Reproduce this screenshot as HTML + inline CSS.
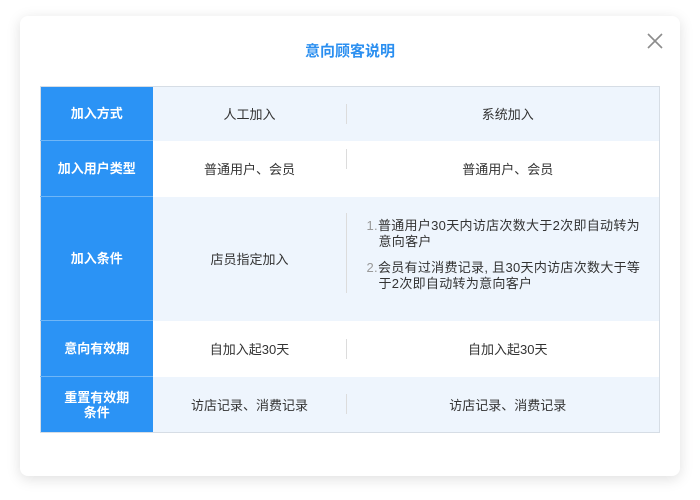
<!DOCTYPE html>
<html><head><meta charset="utf-8"><style>
*{margin:0;padding:0;box-sizing:border-box}
body{width:700px;height:500px;background:#fff;font-family:"Liberation Sans","Noto Sans CJK SC",sans-serif;position:relative;overflow:hidden}
.card{position:absolute;left:20px;top:16px;width:660px;height:460px;background:#fff;border-radius:8px;box-shadow:0 3px 14px rgba(0,0,0,0.13)}
.title{position:absolute;left:0;right:0;top:26px;text-align:center;color:#2b8ff0;font-size:15px;font-weight:bold;line-height:20px}
.close{position:absolute;left:627px;top:17px}
table{position:absolute;left:20px;top:70px;width:620px;border-collapse:collapse;border:1px solid #d6dde5;font-size:13px;color:#333}
td{text-align:center;vertical-align:middle;position:relative;padding:0}
td.l{width:112px;background:#2b93f5;color:#fff;font-weight:bold;font-size:13px;line-height:15px;border-bottom:1px solid #6fb6f7}
tr:last-child td.l{border-bottom:none}
td.b{width:194px}
td.c{padding-left:10px}
tr.a td.b,tr.a td.c{background:#eef5fd}
td.b:after{content:"";position:absolute;right:0;top:50%;height:20px;margin-top:-10px;border-right:1px solid #dcdcdc}
tr.r2 td.b:after{top:8px;margin-top:0}
tr.tall td.b:after{height:80px;margin-top:-46px}
ol{list-style:none;text-align:left;padding:0 12px 0 10px;line-height:16px;letter-spacing:0.3px}
ol li{padding-left:12px;text-indent:-12px;margin:0}
ol li+li{margin-top:10px}
ol span{color:#999}
</style></head><body>
<div class="card">
<div class="title">意向顾客说明</div>
<svg class="close" width="16" height="16" viewBox="0 0 16 16"><path d="M1 1L15 15M15 1L1 15" stroke="#8c8c8c" stroke-width="1.6"/></svg>
<table>
<tr class="a" style="height:54px"><td class="l">加入方式</td><td class="b">人工加入</td><td class="c">系统加入</td></tr>
<tr class="r2" style="height:56px"><td class="l">加入用户类型</td><td class="b">普通用户、会员</td><td class="c">普通用户、会员</td></tr>
<tr class="a tall" style="height:124px"><td class="l">加入条件</td><td class="b">店员指定加入</td><td class="c"><ol style="margin-top:-8px"><li><span>1.</span>普通用户30天内访店次数大于2次即自动转为意向客户</li><li><span>2.</span>会员有过消费记录, 且30天内访店次数大于等于2次即自动转为意向客户</li></ol></td></tr>
<tr style="height:56px"><td class="l">意向有效期</td><td class="b">自加入起30天</td><td class="c">自加入起30天</td></tr>
<tr class="a" style="height:56px"><td class="l">重置有效期<br>条件</td><td class="b">访店记录、消费记录</td><td class="c">访店记录、消费记录</td></tr>
</table>
</div>
</body></html>
